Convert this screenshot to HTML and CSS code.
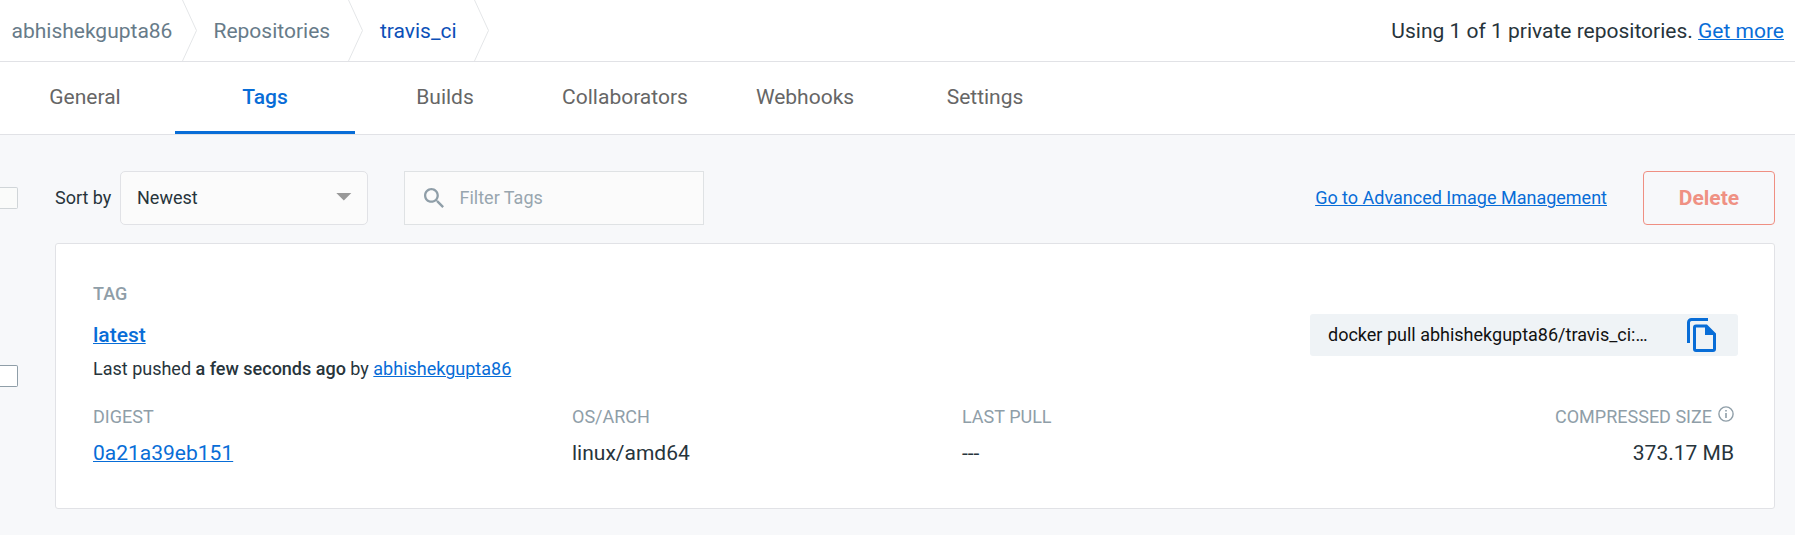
FILE: index.html
```html
<!DOCTYPE html>
<html lang="en">
<head>
<meta charset="utf-8">
<title>travis_ci tags</title>
<link rel="stylesheet" href="styles.css">
</head>
<body>
<header class="topbar">
  <nav class="crumbs">
    <a class="crumb crumb-user">abhishekgupta86</a>
    <svg class="chevron" width="16" height="61" viewBox="0 0 16 61"><path d="M.5 0L14.500 30.5L.5 61"/></svg>
    <a class="crumb crumb-repos">Repositories</a>
    <svg class="chevron" width="16" height="61" viewBox="0 0 16 61"><path d="M.5 0L14.500 30.5L.5 61"/></svg>
    <a class="crumb crumb-current">travis_ci</a>
    <svg class="chevron" width="16" height="61" viewBox="0 0 16 61"><path d="M.5 0L14.500 30.5L.5 61"/></svg>
  </nav>
  <div class="usage">Using 1 of 1 private repositories. <a class="link">Get more</a></div>
</header>
<nav class="tabs">
  <a class="tab">General</a>
  <a class="tab tab-active">Tags</a>
  <a class="tab">Builds</a>
  <a class="tab">Collaborators</a>
  <a class="tab">Webhooks</a>
  <a class="tab">Settings</a>
</nav>
<main class="content">
  <div class="row toolbar">
    <span class="checkbox checkbox-disabled"></span>
    <div class="tools">
      <span class="sort-label">Sort by</span>
      <div class="select"><span>Newest</span><svg width="16" height="8" viewBox="0 0 16 8"><path fill="#999" d="M.3 0h15L7.8 7.6z"/></svg></div>
      <div class="filter">
        <svg width="20" height="20" viewBox="3 3 17.5 17.5"><path fill="#8f9ea8" d="M15.5 14h-.79l-.28-.27C15.41 12.59 16 11.11 16 9.5 16 5.91 13.09 3 9.5 3S3 5.91 3 9.5 5.91 16 9.5 16c1.61 0 3.09-.59 4.23-1.57l.27.28v.79l5 4.99L20.49 19l-4.99-5zm-6 0C7.01 14 5 11.99 5 9.5S7.01 5 9.5 5 14 7.01 14 9.5 11.99 14 9.5 14z"/></svg>
        <span>Filter Tags</span>
      </div>
      <a class="link manage">Go to Advanced Image Management</a>
      <button class="delete">Delete</button>
    </div>
  </div>
  <div class="row">
    <span class="checkbox"></span>
    <section class="card">
      <div class="card-head">
        <div>
          <div class="label label-tag">TAG</div>
          <div class="tag-name"><a class="link">latest</a></div>
          <div class="pushed">Last pushed <b>a few seconds ago</b> by <a class="link">abhishekgupta86</a></div>
        </div>
        <div class="pull">
          <span>docker pull abhishekgupta86/travis_ci:…</span>
          <svg width="29" height="34" viewBox="0 0 29 34"><path d="M21 1.5H4.5a3 3 0 0 0-3 3V25" fill="none" stroke="#086dd7" stroke-width="3"/><path fill="#086dd7" fill-rule="evenodd" d="M9 6.5h11l9 9V31a3 3 0 0 1-3 3H9a3 3 0 0 1-3-3V9.500a3 3 0 0 1 3-3zM9 9.500V31h17V17h-8V9.500z"/></svg>
        </div>
      </div>
      <div class="details">
        <div><div class="label">DIGEST</div><div class="value"><a class="link">0a21a39eb151</a></div></div>
        <div><div class="label">OS/ARCH</div><div class="value">linux/amd64</div></div>
        <div><div class="label">LAST PULL</div><div class="value">---</div></div>
        <div class="size"><div class="label">COMPRESSED SIZE<svg class="info" width="16" height="16" viewBox="0 0 16 16"><circle cx="8" cy="8" r="7.1" fill="none" stroke="#8f9ea8" stroke-width="1.4"/><path fill="#8f9ea8" d="M7.200 4h1.600v1.600H7.200zM7.200 7h1.600v5H7.200z"/></svg></div><div class="value">373.17 MB</div></div>
      </div>
    </section>
  </div>
</main>
</body>
</html>
```
FILE: styles.css
```css
* { box-sizing: border-box; }
body {
  margin: 0;
  height: 535px;
  overflow: hidden;
  background: #f7f8fa;
  color: #27343b;
  font: 18px/24px Roboto, sans-serif;
}
svg { display: block; flex: none; }
.link { color: #086dd7; text-decoration: underline; text-decoration-thickness: 1px; }
.topbar {
  display: flex;
  justify-content: space-between;
  height: 62px;
  padding: 0 11px 0 11.5px;
  background: #fff;
  border-bottom: 1px solid #e1e2e6;
  font-size: 21px;
  line-height: 62px;
  white-space: nowrap;
}
.crumbs { display: flex; color: #677b89; }
.crumb-user { width: 170.5px; }
.crumb-repos { width: 132.500px; margin-left: 15.500px; }
.crumb-current { width: 94px; margin-left: 16px; color: #0b50b8; }
.crumb-repos + .chevron { margin-left: 2px; }
.chevron path { fill: none; stroke: #e4e6e8; stroke-width: 1; }
.tabs {
  display: flex;
  height: 73px;
  margin-left: -5px;
  background: #fff;
  border-bottom: 1px solid #e1e2e6;
  font-size: 21px;
  line-height: 70px;
}
.tab { width: 180px; text-align: center; color: #666; }
.tab-active { color: #086dd7; font-weight: 500; border-bottom: 3px solid #086dd7; }
.content { padding: 36px 20px 0 0; }
.row { display: flex; align-items: center; gap: 37px; }
.checkbox {
  flex: none;
  width: 18px;
  height: 22px;
  border: 1px solid #8f9ea8;
  border-left: 0;
  border-radius: 0 2px 2px 0;
  background: #fff;
}
.checkbox-disabled { border-color: #d0d5d8; background: #fafbfa; }
.toolbar { margin-bottom: 18px; }
.tools { flex: 1; display: flex; align-items: center; height: 54px; }
.sort-label { width: 65px; white-space: nowrap; }
.select {
  display: flex;
  align-items: center;
  justify-content: space-between;
  width: 248px;
  height: 54px;
  padding: 0 15px 0 16px;
  border: 1px solid #e1e2e6;
  border-radius: 5px;
  background: #fbfbfb;
}
.select svg { margin-top: -2px; }
.filter {
  display: flex;
  align-items: center;
  gap: 16px;
  width: 300px;
  height: 54px;
  margin-left: 36px;
  padding-left: 18.500px;
  border: 1px solid #dfe2e4;
  background: #fbfbfb;
  color: #98a6af;
}
.manage { margin-left: auto; margin-right: 36px; }
.delete {
  width: 132px;
  height: 54px;
  padding: 0;
  border: 1px solid #ef8f82;
  border-radius: 4px;
  background: transparent;
  color: #ef9183;
  font: 700 21px/24px Roboto, sans-serif;
}
.card {
  flex: 1;
  height: 266px;
  padding: 38px 36px 0 37px;
  border: 1px solid #e1e2e6;
  border-radius: 3px;
  background: #fff;
}
.card-head { display: flex; justify-content: space-between; }
.label { color: #8f9ea8; white-space: nowrap; }
.label-tag { font-weight: 500; }
.tag-name { margin-top: 17px; font-size: 21px; font-weight: 500; }
.pushed { margin-top: 10px; }
.pushed b { font-weight: 500; }
.pull {
  display: flex;
  align-items: center;
  justify-content: space-between;
  width: 428px;
  height: 42px;
  margin-top: 32px;
  padding: 0 22px 0 18px;
  border-radius: 3px;
  background: #eff3f6;
  color: #111;
  font-size: 18px;
}
.details { display: grid; grid-template-columns: 479px 390px 1fr auto; margin-top: 24px; }
.value { margin-top: 12px; font-size: 21px; }
.size { padding-right: 4px; text-align: right; }
.size .label { display: flex; }
.info { margin: 1px 0 0 6px; }
```
